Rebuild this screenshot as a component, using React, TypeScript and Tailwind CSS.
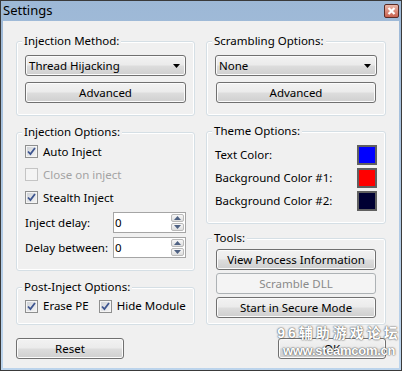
import { ReactNode } from 'react'

type GroupProps = {
  title: string
  className?: string
  children?: ReactNode
}

function Group({ title, className = '', children }: GroupProps) {
  return (
    <div
      className={`relative rounded-[3px] border border-[#d5dfe5] shadow-[inset_0_0_0_1px_#ffffff] ${className}`}
    >
      <span className="absolute left-[5px] top-[-9px] whitespace-nowrap bg-[#f0f0f0] px-[2px] leading-[16px] text-black">
        {title}
      </span>
      {children}
    </div>
  )
}

function Button({
  children,
  disabled,
  className = '',
}: {
  children: ReactNode
  disabled?: boolean
  className?: string
}) {
  return disabled ? (
    <div
      className={`flex h-[21px] items-center justify-center rounded-[3px] border border-[#adb2b5] bg-[#f4f4f4] text-[#8a8a8a] ${className}`}
    >
      {children}
    </div>
  ) : (
    <div
      className={`flex h-[21px] items-center justify-center rounded-[3px] border border-[#707070] bg-[linear-gradient(#f2f2f2_0%,#ebebeb_48%,#dddddd_52%,#cfcfcf_100%)] text-black shadow-[inset_0_0_0_1px_#fbfbfb] ${className}`}
    >
      {children}
    </div>
  )
}

function Combo({ value }: { value: string }) {
  return (
    <div className="flex h-[21px] items-center justify-between rounded-[3px] border border-[#707070] bg-[linear-gradient(#f2f2f2_0%,#ebebeb_48%,#dddddd_52%,#cfcfcf_100%)] pl-[3px] pr-[5px] text-black shadow-[inset_0_0_0_1px_#fbfbfb]">
      <span>{value}</span>
      <svg width="7" height="4" viewBox="0 0 7 4">
        <path d="M0 0H7L3.5 4Z" fill="#000" />
      </svg>
    </div>
  )
}

function Check({
  label,
  checked,
  disabled,
}: {
  label: string
  checked?: boolean
  disabled?: boolean
}) {
  return (
    <div className="flex items-center gap-[5px] whitespace-nowrap">
      <div
        className={`flex h-[13px] w-[13px] shrink-0 items-center justify-center border ${
          disabled
            ? 'border-[#c4c4c4] bg-[#f4f4f4]'
            : 'border-[#8e8f8f] bg-[linear-gradient(135deg,#cbcfd5,#f6f6f6)] shadow-[inset_0_0_0_1px_#f4f4f4]'
        }`}
      >
        {checked && (
          <svg width="9" height="9" viewBox="0 0 9 9">
            <path
              d="M1 4.5L3.4 7L8 1"
              fill="none"
              stroke="#3d5590"
              strokeWidth="1.8"
            />
          </svg>
        )}
      </div>
      <span className={disabled ? 'text-[#a3a3a3]' : 'text-black'}>
        {label}
      </span>
    </div>
  )
}

function Spin({ value }: { value: string }) {
  return (
    <div className="flex h-[21px] w-[73px] border border-[#a5a5a5] bg-white">
      <span className="flex-1 pl-[1px] leading-[19px] text-black">{value}</span>
      <div className="flex w-[15px] flex-col gap-[1px] p-[1px]">
        <div className="flex flex-1 items-center justify-center rounded-[2px] border border-[#b9b9b9] bg-[linear-gradient(#f7f7f7,#dedede)]">
          <svg width="7" height="4" viewBox="0 0 7 4">
            <path d="M3.5 0L7 4H0Z" fill="#4f6283" />
          </svg>
        </div>
        <div className="flex flex-1 items-center justify-center rounded-[2px] border border-[#b9b9b9] bg-[linear-gradient(#f7f7f7,#dedede)]">
          <svg width="7" height="4" viewBox="0 0 7 4">
            <path d="M0 0H7L3.5 4Z" fill="#4f6283" />
          </svg>
        </div>
      </div>
    </div>
  )
}

function ColorRow({ label, color }: { label: string; color: string }) {
  return (
    <div className="flex h-[23px] items-center justify-between">
      <span className="text-black">{label}</span>
      <div className={`h-[20px] w-[20px] border-2 border-[#606060] ${color}`} />
    </div>
  )
}

export default function App() {
  return (
    <div className="relative flex h-[371px] w-[402px] flex-col overflow-hidden border border-[#3a3a3a] bg-[linear-gradient(#9db8d6,#bcd4ec)] font-['Noto_Sans',sans-serif] text-[11.5px]">
      <div className="flex h-[20px] items-center justify-between pl-[2px] pr-[2px]">
        <span className="text-[13px] text-black">Settings</span>
        <div className="flex h-[14px] w-[15px] items-center justify-center rounded-[2px] border border-[#5b2b24] bg-[linear-gradient(#ebb8aa,#c9614f)]">
          <svg width="9" height="8" viewBox="0 0 9 8">
            <path
              d="M1.5 1L7.5 7M7.5 1L1.5 7"
              stroke="#ffffff"
              strokeWidth="2.2"
            />
          </svg>
        </div>
      </div>

      <div className="mx-[2px] mb-[2px] flex-1 bg-[#f0f0f0] px-[13px] pt-[20px]">
        <div className="grid grid-cols-[179px_180px] gap-x-[11px]">
          <div className="flex flex-col">
            <Group title="Injection Method:" className="h-[75px] px-[8px] pt-[13px]">
              <Combo value="Thread Hijacking" />
              <Button className="mt-[6px]">Advanced</Button>
            </Group>

            <Group title="Injection Options:" className="mt-[16px] h-[139px] px-[8px] pt-[7px]">
              <div className="flex h-[23px] items-center">
                <Check label="Auto Inject" checked />
              </div>
              <div className="flex h-[23px] items-center">
                <Check label="Close on inject" disabled />
              </div>
              <div className="flex h-[23px] items-center">
                <Check label="Stealth Inject" checked />
              </div>
              <div className="mt-[3px] flex items-center justify-between">
                <span className="text-black">Inject delay:</span>
                <Spin value="0" />
              </div>
              <div className="mt-[4px] flex items-center justify-between">
                <span className="text-black">Delay between:</span>
                <Spin value="0" />
              </div>
            </Group>

            <Group title="Post-Inject Options:" className="mt-[16px] flex h-[38px] items-center gap-[10px] px-[8px]">
              <Check label="Erase PE" checked />
              <Check label="Hide Module" checked />
            </Group>
          </div>

          <div className="flex flex-col">
            <Group title="Scrambling Options:" className="h-[75px] px-[8px] pt-[13px]">
              <Combo value="None" />
              <Button className="mx-[1px] mt-[6px]">Advanced</Button>
            </Group>

            <Group title="Theme Options:" className="mt-[15px] h-[93px] px-[8px] pt-[11px]">
              <ColorRow label="Text Color:" color="bg-[#0000ff]" />
              <ColorRow label="Background Color #1:" color="bg-[#ff0000]" />
              <ColorRow label="Background Color #2:" color="bg-[#000033]" />
            </Group>

            <Group title="Tools:" className="mt-[14px] flex h-[87px] flex-col gap-[3px] px-[9px] pt-[10px]">
              <Button>View Process Information</Button>
              <Button disabled>Scramble DLL</Button>
              <Button>Start in Secure Mode</Button>
            </Group>
          </div>
        </div>

        <div className="mt-[13px] flex justify-between">
          <Button className="w-[108px]">Reset</Button>
          <Button className="w-[108px]">OK</Button>
        </div>
      </div>

      <div className="pointer-events-none absolute left-[279px] top-[323px] flex w-[118px] flex-col items-center whitespace-nowrap font-['Liberation_Sans','Noto_Sans_CJK_SC',sans-serif] font-bold text-white [text-shadow:0_0_2px_#555,0_0_1px_#555]">
        <span className="text-[14px] leading-[19px] tracking-[3px]">96辅助游戏论坛</span>
        <span className="text-[13px] leading-[16px] tracking-[-0.3px]">www.steamcom.cn</span>
      </div>
    </div>
  )
}
